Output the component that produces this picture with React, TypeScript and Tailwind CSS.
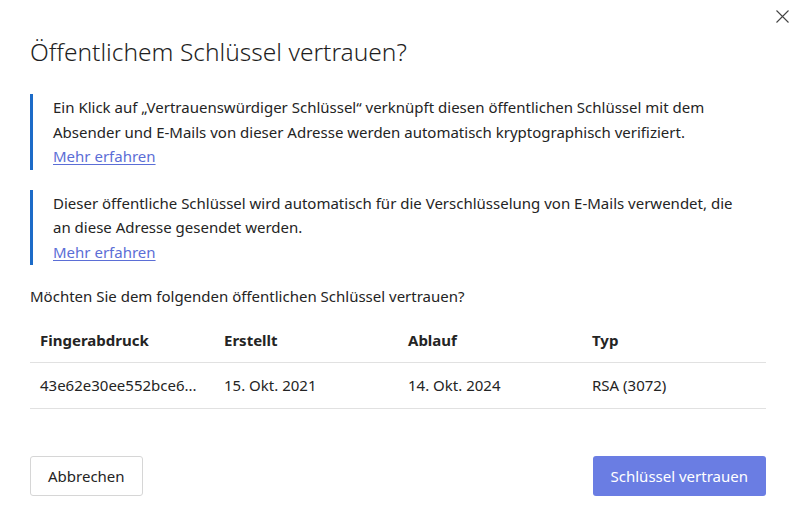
import * as React from "react";

const columns = ["Fingerabdruck", "Erstellt", "Ablauf", "Typ"];
const row = ["43e62e30ee552bce6...", "15. Okt. 2021", "14. Okt. 2024", "RSA (3072)"];

function InfoBlock({ children }: { children: React.ReactNode }) {
  return (
    <div className="border-l-[3px] border-[#1c6bc8] pl-[20px] py-[1px] text-[15px] leading-[24.5px] text-[#242424]">
      <p>{children}</p>
      <a href="#" className="text-[#5b6ed6] underline underline-offset-2">
        Mehr erfahren
      </a>
    </div>
  );
}

export default function App() {
  return (
    <div
      className="relative w-[800px] h-[525px] bg-white overflow-hidden px-[30px] text-[#242424]"
      style={{ fontFamily: '"Noto Sans", "Open Sans", Arial, sans-serif' }}
    >
      <button className="absolute top-[8px] right-[10px] w-[16px] h-[16px] flex items-center justify-center text-[#444]">
        <svg width="13" height="13" viewBox="0 0 13 13" fill="none" stroke="currentColor" strokeWidth="1.1">
          <path d="M0.5 0.5 L12.5 12.5 M12.5 0.5 L0.5 12.5" />
        </svg>
      </button>

      <h1 className="pt-[36px] text-[24.5px] leading-[32px] font-light text-[#1f1f1f]">
        Öffentlichem Schlüssel vertrauen?
      </h1>

      <div className="mt-[26px] flex flex-col gap-[20px] pr-[20px]">
        <InfoBlock>
          Ein Klick auf „Vertrauenswürdiger Schlüssel“ verknüpft diesen öffentlichen Schlüssel mit dem Absender und
          E-Mails von dieser Adresse werden automatisch kryptographisch verifiziert.
        </InfoBlock>
        <InfoBlock>
          Dieser öffentliche Schlüssel wird automatisch für die Verschlüsselung von E-Mails verwendet, die an diese
          Adresse gesendet werden.
        </InfoBlock>
      </div>

      <p className="mt-[19px] text-[15px] leading-[24px]">
        Möchten Sie dem folgenden öffentlichen Schlüssel vertrauen?
      </p>

      <div className="mt-[11px] w-[736px] text-[15px]">
        <div className="grid grid-cols-[184px_184px_184px_1fr] h-[44px] items-center border-b border-[#e1e1e1] pl-[10px]">
          {columns.map((c) => (
            <div key={c} className="font-bold">
              {c}
            </div>
          ))}
        </div>
        <div className="grid grid-cols-[184px_184px_184px_1fr] h-[46px] items-center border-b border-[#e1e1e1] pl-[10px]">
          {row.map((c) => (
            <div key={c}>{c}</div>
          ))}
        </div>
      </div>

      <div className="mt-[47px] w-[736px] flex justify-between">
        <button className="h-[40px] px-[17px] border border-[#d6d6d6] rounded-[3px] text-[15px] bg-white">
          Abbrechen
        </button>
        <button className="h-[40px] px-[18px] rounded-[3px] text-[15px] bg-[#6a7de3] text-white">
          Schlüssel vertrauen
        </button>
      </div>
    </div>
  );
}
